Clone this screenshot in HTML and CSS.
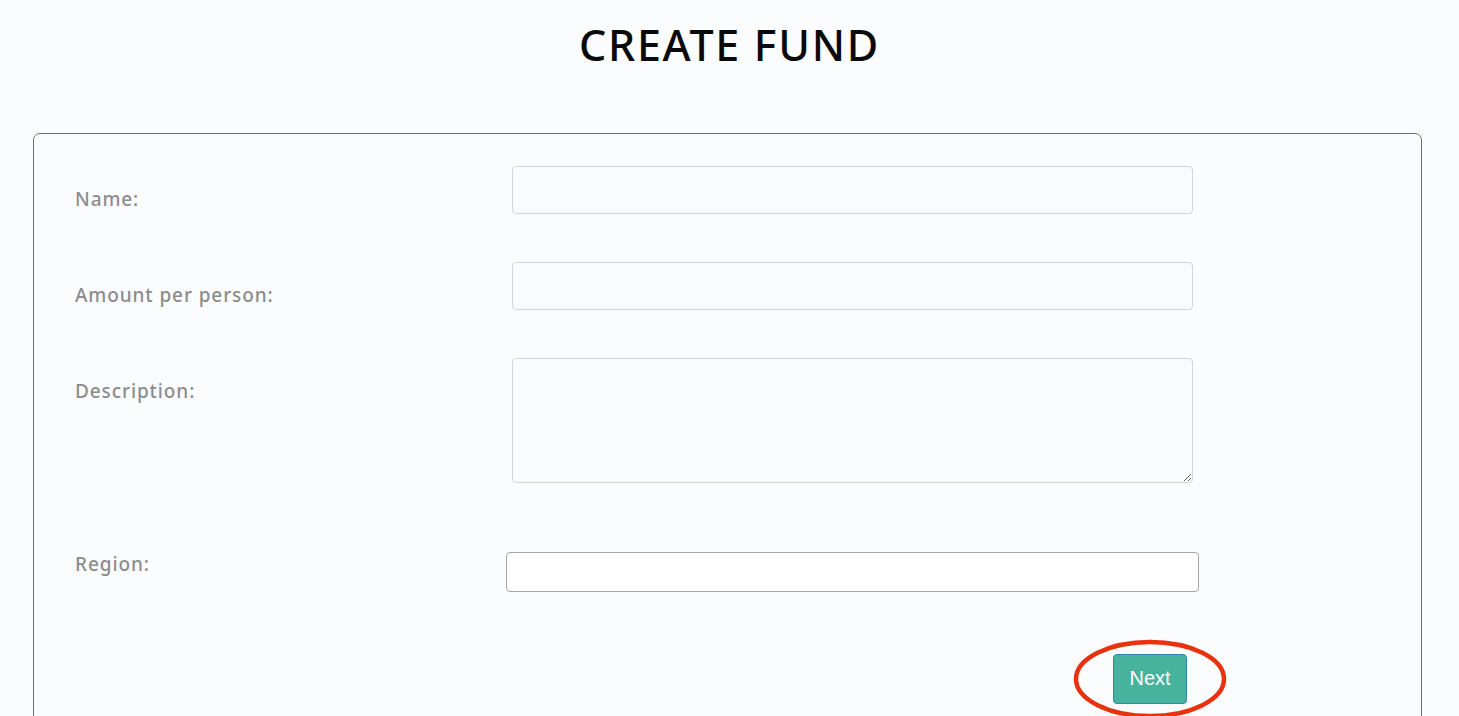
FILE: index.html
```html
<!DOCTYPE html>
<html lang="en">
<head>
<meta charset="utf-8">
<title>Create Fund</title>
<link rel="stylesheet" href="styles.css">
</head>
<body>
<h1 class="page-title">CREATE FUND</h1>
<form class="card">
  <div class="row">
    <label class="label" for="name">Name:</label>
    <input class="field" id="name" type="text">
  </div>
  <div class="row">
    <label class="label" for="amount">Amount per person:</label>
    <input class="field" id="amount" type="text">
  </div>
  <div class="row">
    <label class="label" for="desc">Description:</label>
    <textarea class="field area" id="desc"></textarea>
  </div>
  <div class="row row-region">
    <label class="label label-region" for="region">Region:</label>
    <input class="region" id="region" type="text">
  </div>
  <div class="actions">
    <div class="btn-wrap">
      <button class="btn" type="button">Next</button>
      <svg class="ring" width="160" height="84" viewBox="0 0 160 84" aria-hidden="true">
        <ellipse cx="80" cy="42" rx="74" ry="37" fill="none" stroke="#e8320f" stroke-width="4.5"/>
      </svg>
    </div>
  </div>
</form>
</body>
</html>
```
FILE: styles.css
```css
html, body {
  margin: 0;
  padding: 0;
  background: #fbfcfe;
  height: 716px;
  overflow: hidden;
}
body {
  font-family: "Noto Sans", "Open Sans", sans-serif;
}
.page-title {
  margin: 0;
  padding-top: 19px;
  height: 133px;
  box-sizing: border-box;
  text-align: center;
  font-size: 43px;
  font-weight: 500;
  line-height: 52px;
  letter-spacing: 1.7px;
  color: #0a0a0a;
}
.card {
  margin: 0 37px 0 33px;
  border: 1.5px solid #6e6e6e;
  border-radius: 7px;
  padding: 31.5px 0 40px 41px;
  height: 700px;
}
.row {
  display: grid;
  grid-template-columns: 437px 681px;
  align-items: start;
  margin-bottom: 48px;
}
.label {
  margin-top: 20px;
  font-size: 19px;
  line-height: 26px;
  font-weight: 500;
  letter-spacing: 0.9px;
  color: #8c8c8c;
}
.field {
  display: block;
  box-sizing: border-box;
  width: 681px;
  height: 48px;
  margin: 0;
  border: 1px solid #d3d5d8;
  border-radius: 4px;
  background: #fafbfc;
  font: inherit;
}
.area {
  height: 125px;
  resize: vertical;
}
.row-region {
  margin-bottom: 62px;
}
.label-region {
  margin-top: 20px;
}
.region {
  display: block;
  box-sizing: border-box;
  width: 693px;
  height: 40px;
  margin: 21px 0 0 -6px;
  border: 1px solid #a6a6a6;
  border-radius: 4px;
  background: #ffffff;
  font: inherit;
}
.actions {
  display: flex;
  justify-content: flex-end;
  width: 1112px;
}
.btn-wrap {
  position: relative;
}
.btn {
  display: block;
  width: 74px;
  height: 50px;
  border: 1px solid #2f86a6;
  border-radius: 4px;
  background: #47b39d;
  color: #ffffff;
  font-family: "Liberation Sans", Arial, sans-serif;
  font-size: 20px;
  padding: 0;
}
.ring {
  position: absolute;
  left: -43px;
  top: -17px;
  pointer-events: none;
}
```
